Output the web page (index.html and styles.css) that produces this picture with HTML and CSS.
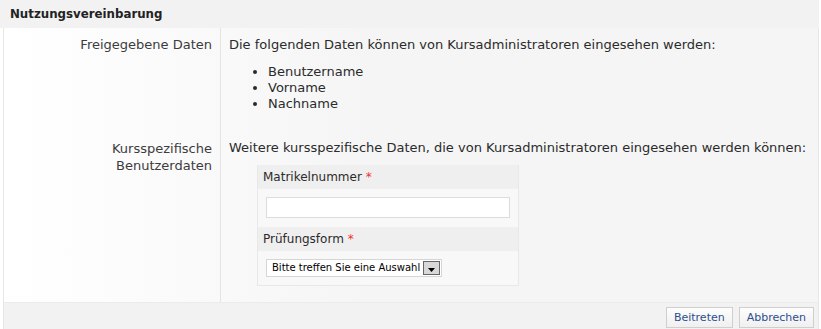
FILE: index.html
```html
<!DOCTYPE html>
<html>
<head>
    <title>Nutzungsvereinbarung</title>
    <link rel="stylesheet" href="styles.css">
</head>
<body>
    <div class="kopf">Nutzungsvereinbarung</div>
    <div class="panel">
        <div class="zeile">
            <div class="beschriftung">Freigegebene Daten</div>
            <div class="inhalt">
                <p>Die folgenden Daten können von Kursadministratoren eingesehen werden:</p>
                <ul class="liste">
                    <li>Benutzername</li>
                    <li>Vorname</li>
                    <li>Nachname</li>
                </ul>
            </div>
        </div>
        <div class="zeile zweite">
            <div class="beschriftung">Kursspezifische<br>Benutzerdaten</div>
            <div class="inhalt">
                <p>Weitere kursspezifische Daten, die von Kursadministratoren eingesehen werden können:</p>
                <div class="feldbox">
                    <div class="feldkopf">Matrikelnummer <span class="pflicht">*</span></div>
                    <div class="feldwert">
                        <input type="text" class="eingabe">
                    </div>
                    <div class="feldkopf">Prüfungsform <span class="pflicht">*</span></div>
                    <div class="feldwert letzte">
                        <div class="auswahl">
                            <span class="auswahl-text">Bitte treffen Sie eine Auswahl</span>
                            <span class="auswahl-pfeil">
                                <svg width="7" height="4" viewBox="0 0 7 4"><path d="M0 0h7L3.5 4z" fill="#000"/></svg>
                            </span>
                        </div>
                    </div>
                </div>
            </div>
        </div>
        <div class="fuss">
            <button class="knopf">Beitreten</button>
            <button class="knopf">Abbrechen</button>
        </div>
    </div>
</body>
</html>
```

FILE: styles.css
```css
body {
    margin: 0;
    font-family: "DejaVu Sans", Verdana, sans-serif;
    font-size: 13px;
    color: #2b2b2b;
    background-color: #fff;
}

.kopf {
    height: 28px;
    line-height: 28px;
    padding-left: 10px;
    margin-right: 2px;
    font-size: 11.8px;
    font-weight: bold;
    color: #222;
    background-color: #f2f2f2;
}

.panel {
    margin: 0 2px 0 3px;
    border: 1px solid #e6e6e6;
    border-top: none;
    background: linear-gradient(to right, #fff 0%, #f5f5f5 45%, #f5f5f5 100%);
}

.zeile {
    display: flex;
    line-height: 16px;
}

.zweite .beschriftung,
.zweite .inhalt {
    padding-top: 28px;
}

.zweite .beschriftung {
    line-height: 17px;
}

.zweite .inhalt {
    padding-bottom: 16px;
}

.beschriftung {
    width: 208px;
    padding: 9px 8px 0 0;
    text-align: right;
    color: #3c3c3c;
    border-right: 1px solid #e4e4e4;
}

.inhalt {
    flex: 1;
    padding: 9px 0 0 8px;
}

.inhalt p {
    margin: 0;
}

.liste {
    margin: 11px 0 0 0;
    padding-left: 39px;
}

.feldbox {
    width: 260px;
    margin: 9px 0 0 28px;
    border: 1px solid #e8e8e8;
    border-top: none;
    background-color: #f8f8f8;
}

.feldkopf {
    height: 24px;
    line-height: 24px;
    padding-left: 5px;
    font-size: 12px;
    color: #2b2b2b;
    background-color: #efefef;
}

.pflicht {
    color: #e33;
}

.feldwert {
    padding: 8px 8px 9px 8px;
}

.feldwert.letzte {
    padding-bottom: 8px;
}

.eingabe {
    display: block;
    box-sizing: border-box;
    width: 244px;
    height: 21px;
    margin: 0;
    border: 1px solid #dcdcdc;
    background-color: #fff;
}

.auswahl {
    display: flex;
    align-items: center;
    box-sizing: border-box;
    width: 176px;
    height: 18px;
    padding-left: 5px;
    border: 1px solid #d6d6d6;
    background-color: #fff;
    font-size: 10px;
    color: #000;
}

.auswahl-text {
    flex: 1;
    white-space: nowrap;
}

.auswahl-pfeil {
    display: flex;
    align-items: flex-end;
    justify-content: center;
    box-sizing: border-box;
    width: 17px;
    height: 14px;
    margin-right: 1px;
    padding-bottom: 2px;
    border: 1px solid #666;
    background-color: #d8d8d8;
}

.fuss {
    display: flex;
    justify-content: flex-end;
    gap: 6px;
    padding: 4px 4px 1px 0;
    border-top: 1px solid #ebebeb;
    background-color: #f2f2f2;
}

.knopf {
    height: 21px;
    padding: 0 7px;
    font-family: "DejaVu Sans", Verdana, sans-serif;
    font-size: 11px;
    color: #2d4f8f;
    border: 1px solid #cfcfcf;
    background: linear-gradient(#fdfdfd, #f0f0f0);
    cursor: pointer;
}
```
